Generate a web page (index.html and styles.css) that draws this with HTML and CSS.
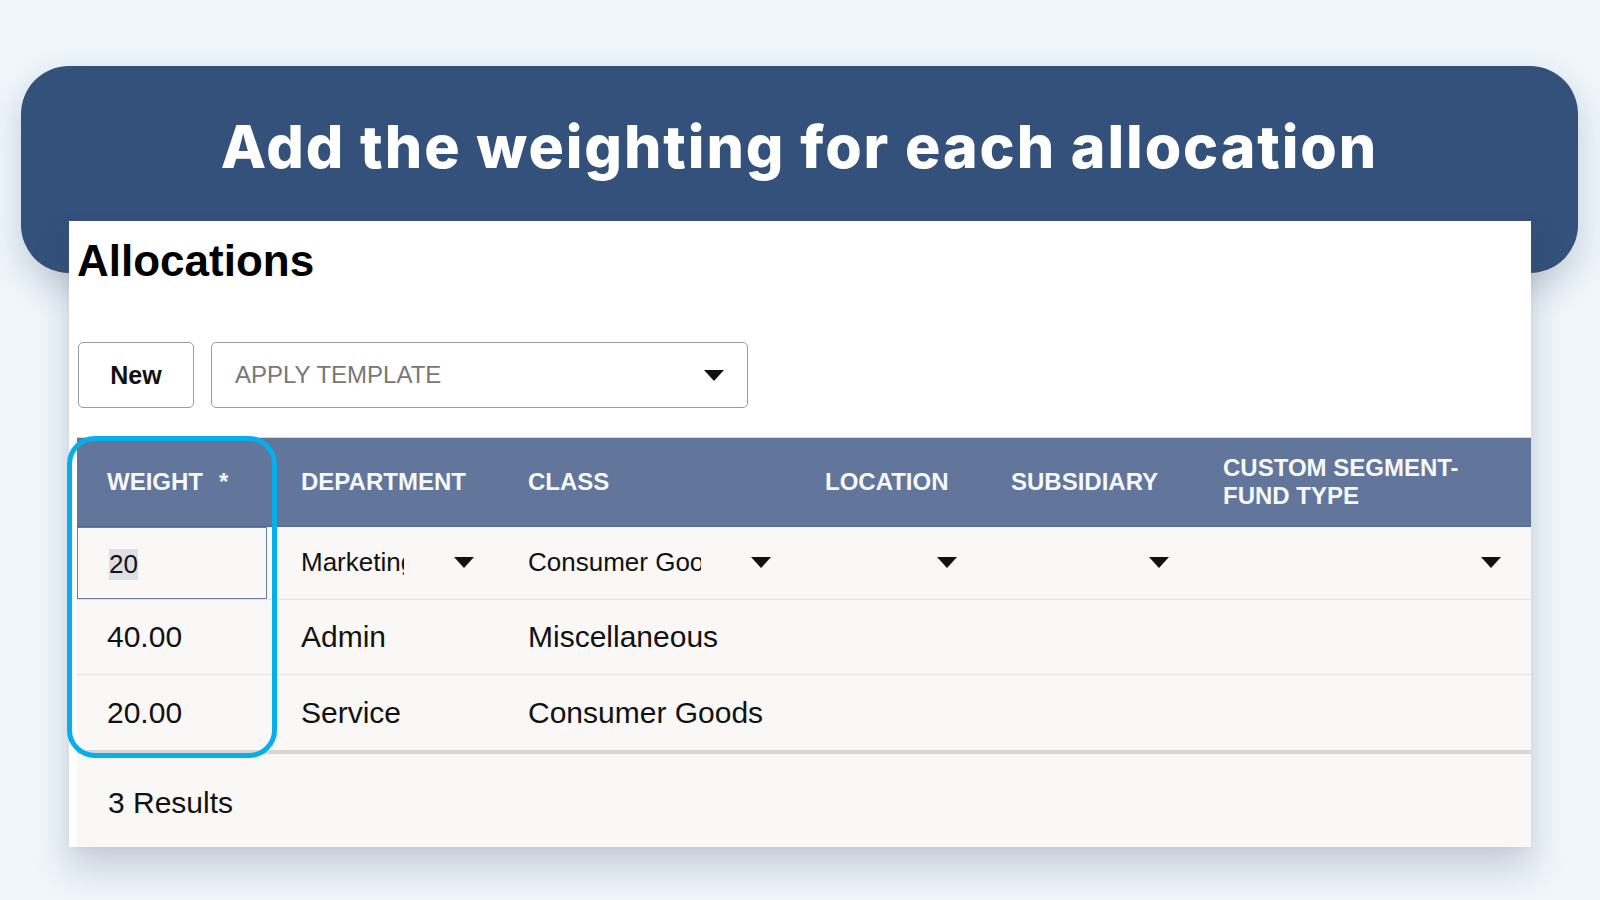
FILE: index.html
```html
<!DOCTYPE html>
<html lang="en">
<head>
<meta charset="utf-8">
<title>Allocations</title>
<link rel="stylesheet" href="styles.css">
</head>
<body>
<div class="page">
  <header class="banner">
    <h1 class="banner-title">Add the weighting for each allocation</h1>
  </header>
  <section class="card">
    <h2 class="card-title">Allocations</h2>
    <div class="toolbar">
      <button class="btn" type="button">New</button>
      <div class="select">
        <span class="select-text">APPLY TEMPLATE</span>
        <svg class="caret" viewBox="0 0 20 11" width="20" height="11"><polygon points="0,0 20,0 10,11"/></svg>
      </div>
    </div>
    <div class="table-wrap">
      <div class="table">
        <div class="row head">
          <div class="cell">WEIGHT<span class="req">*</span></div>
          <div class="cell">DEPARTMENT</div>
          <div class="cell">CLASS</div>
          <div class="cell">LOCATION</div>
          <div class="cell">SUBSIDIARY</div>
          <div class="cell">CUSTOM SEGMENT-<br>FUND TYPE</div>
        </div>
        <div class="row edit">
          <div class="cell input-cell"><div class="input"><span class="sel">20</span></div></div>
          <div class="cell dd"><span class="dd-text">Marketing</span><svg class="caret" viewBox="0 0 20 11" width="20" height="11"><polygon points="0,0 20,0 10,11"/></svg></div>
          <div class="cell dd"><span class="dd-text">Consumer Goods</span><svg class="caret" viewBox="0 0 20 11" width="20" height="11"><polygon points="0,0 20,0 10,11"/></svg></div>
          <div class="cell dd"><span class="dd-text"></span><svg class="caret" viewBox="0 0 20 11" width="20" height="11"><polygon points="0,0 20,0 10,11"/></svg></div>
          <div class="cell dd"><span class="dd-text"></span><svg class="caret" viewBox="0 0 20 11" width="20" height="11"><polygon points="0,0 20,0 10,11"/></svg></div>
          <div class="cell dd dd-last"><span class="dd-text"></span><svg class="caret" viewBox="0 0 20 11" width="20" height="11"><polygon points="0,0 20,0 10,11"/></svg></div>
        </div>
        <div class="row">
          <div class="cell">40.00</div>
          <div class="cell">Admin</div>
          <div class="cell">Miscellaneous</div>
          <div class="cell"></div>
          <div class="cell"></div>
          <div class="cell"></div>
        </div>
        <div class="row last">
          <div class="cell">20.00</div>
          <div class="cell">Service</div>
          <div class="cell">Consumer Goods</div>
          <div class="cell"></div>
          <div class="cell"></div>
          <div class="cell"></div>
        </div>
      </div>
      <div class="highlight"></div>
    </div>
    <div class="footer">3 Results</div>
  </section>
</div>
</body>
</html>
```

FILE: styles.css
```css
* { box-sizing: border-box; }

html, body {
  margin: 0;
  padding: 0;
}

body {
  background: #eff6fc;
  width: 1600px;
  height: 900px;
  overflow: hidden;
  font-family: "Liberation Sans", Arial, sans-serif;
  color: #111;
}

.page {
  padding-top: 66px;
}

.banner {
  margin-left: 21px;
  width: 1557px;
  height: 207px;
  background: #34517b;
  border-radius: 48px;
  box-shadow: 0 14px 34px rgba(40, 60, 85, 0.22);
  padding-top: 51px;
}

.banner-title {
  margin: 0;
  text-align: center;
  font-family: Inter, "Open Sans", sans-serif;
  font-weight: 800;
  font-size: 59px;
  line-height: 59px;
  color: #ffffff;
  letter-spacing: 1.9px;
}

.card {
  position: relative;
  z-index: 1;
  margin-top: -52px;
  margin-left: 69px;
  width: 1462px;
  height: 626px;
  background: #ffffff;
  padding: 18px 0 0 8px;
  box-shadow: 0 22px 34px rgba(50, 70, 90, 0.22), 0 0 10px rgba(50, 70, 90, 0.06);
  display: flex;
  flex-direction: column;
}

.card-title {
  margin: 0;
  font-size: 44px;
  line-height: 44px;
  font-weight: 700;
  color: #000;
  padding-left: 0;
}

.toolbar {
  margin-top: 59px;
  display: flex;
  gap: 17px;
  height: 66px;
}

.btn {
  width: 116px;
  height: 66px;
  margin: 0 0 0 1px;
  background: #fff;
  border: 1.5px solid #9b9b9b;
  border-radius: 5px;
  font-family: "Liberation Sans", Arial, sans-serif;
  font-weight: 700;
  font-size: 25px;
  color: #111;
  padding: 0;
}

.select {
  width: 537px;
  height: 66px;
  border: 1.5px solid #9b9b9b;
  border-radius: 5px;
  display: flex;
  align-items: center;
  padding: 0 23px 0 23px;
}

.select-text {
  flex: 1;
  font-size: 24px;
  color: #777;
}

.caret {
  display: block;
  flex: none;
  fill: #111;
}

.table-wrap {
  position: relative;
  margin-top: 29px;
}

.table {
  background: #f9f8f6;
}

.row {
  display: grid;
  grid-template-columns: 194px 227px 297px 186px 212px 1fr;
  height: 75px;
  border-bottom: 1px solid #e3e3e7;
  align-items: center;
  font-size: 30px;
}

.row.head {
  height: 90px;
  background: #61769a;
  border-top: 1px solid #cfd5dd;
  border-bottom: 1px solid #536889;
  color: #f6f8fb;
  font-size: 24px;
  font-weight: 700;
  line-height: 28px;
}

.row.edit {
  height: 73px;
  align-items: stretch;
  font-size: 26px;
}

.row.last {
  border-bottom: 4px solid #d6d6d9;
  height: 79px;
}

.cell {
  padding-left: 30px;
  white-space: nowrap;
}

.req {
  margin-left: 16px;
}

.input-cell {
  padding: 0 4px 0 0;
}

.input {
  height: 72px;
  border: 1.5px solid #6b7b9b;
  display: flex;
  align-items: center;
  padding-left: 31px;
  padding-top: 2px;
}

.sel {
  background: #dcdfe4;
}

.dd {
  display: flex;
  align-items: center;
  padding-bottom: 2px;
}

.dd-text {
  flex: 1;
  min-width: 0;
  overflow: hidden;
  margin-right: 50px;
}

.dd .caret {
  margin-right: 24px;
}

.dd-last .caret {
  margin-right: 30px;
}

.highlight {
  position: absolute;
  left: -10px;
  top: -1px;
  width: 210px;
  height: 322px;
  border: 5.5px solid #07aeec;
  border-radius: 28px;
  pointer-events: none;
}

.footer {
  flex: 1;
  background: #f9f8f6;
  display: flex;
  align-items: center;
  padding: 5px 0 0 31px;
  font-size: 30px;
  color: #111;
}
```
